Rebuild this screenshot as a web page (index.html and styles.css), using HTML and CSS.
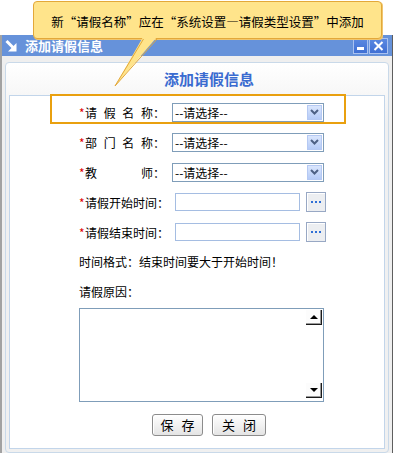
FILE: index.html
```html
<!DOCTYPE html>
<html lang="zh-CN">
<head>
    <meta charset="UTF-8">
    <title>添加请假信息</title>
    <link rel="stylesheet" href="styles.css">
</head>
<body>
    <!-- 提示气泡 -->
    <div class="tip">
        <div class="tip-box">新“请假名称”应在“系统设置—请假类型设置”中添加</div>
        <svg class="tip-tail" width="60" height="54" viewBox="0 0 60 54">
            <polygon points="43,0 57,0 15,49" fill="#ffe48b"/>
            <polyline points="43.5,2 15,49 57,2" fill="none" stroke="#e3a83a" stroke-width="1"/>
        </svg>
    </div>

    <div class="window">
        <!-- 标题栏 -->
        <div class="titlebar">
            <svg class="title-icon" width="12" height="13" viewBox="0 0 12 13">
                <line x1="1.5" y1="2" x2="8" y2="8.5" stroke="#fff" stroke-width="3"/>
                <polygon points="11.5,4 11.5,12.5 3,12.5" fill="#fff"/>
            </svg>
            <span class="title-text">添加请假信息</span>
            <div class="title-btns">
                <span class="tbtn tbtn-min"><i></i></span>
                <span class="tbtn tbtn-close">
                    <svg width="11" height="10" viewBox="0 0 11 10">
                        <path d="M1.5 1 L9.5 9 M9.5 1 L1.5 9" stroke="#fff" stroke-width="2"/>
                    </svg>
                </span>
            </div>
        </div>

        <div class="win-body">
            <div class="panel">
                <h2 class="panel-title">添加请假信息</h2>
                <div class="form">
                    <div class="mark"></div>

                    <div class="row">
                        <div class="label"><span class="req">*</span><span class="just">请假名称</span>：</div>
                        <div class="select"><span>--请选择--</span><i class="select-arrow"><svg width="9" height="6" viewBox="0 0 9 6"><path d="M1 1 L4.5 4.5 L8 1" fill="none" stroke="#4d6185" stroke-width="2"/></svg></i></div>
                    </div>
                    <div class="row">
                        <div class="label"><span class="req">*</span><span class="just">部门名称</span>：</div>
                        <div class="select"><span>--请选择--</span><i class="select-arrow"><svg width="9" height="6" viewBox="0 0 9 6"><path d="M1 1 L4.5 4.5 L8 1" fill="none" stroke="#4d6185" stroke-width="2"/></svg></i></div>
                    </div>
                    <div class="row">
                        <div class="label"><span class="req">*</span><span class="just">教师</span>：</div>
                        <div class="select"><span>--请选择--</span><i class="select-arrow"><svg width="9" height="6" viewBox="0 0 9 6"><path d="M1 1 L4.5 4.5 L8 1" fill="none" stroke="#4d6185" stroke-width="2"/></svg></i></div>
                    </div>
                    <div class="row">
                        <div class="label"><span class="req">*</span>请假开始时间：</div>
                        <div class="input"></div>
                        <span class="pick"><svg width="10" height="2" viewBox="0 0 10 2"><rect x="0" y="0" width="2" height="2" fill="#2f6fd6"/><rect x="4" y="0" width="2" height="2" fill="#2f6fd6"/><rect x="8" y="0" width="2" height="2" fill="#2f6fd6"/></svg></span>
                    </div>
                    <div class="row">
                        <div class="label"><span class="req">*</span>请假结束时间：</div>
                        <div class="input"></div>
                        <span class="pick"><svg width="10" height="2" viewBox="0 0 10 2"><rect x="0" y="0" width="2" height="2" fill="#2f6fd6"/><rect x="4" y="0" width="2" height="2" fill="#2f6fd6"/><rect x="8" y="0" width="2" height="2" fill="#2f6fd6"/></svg></span>
                    </div>

                    <div class="hint">时间格式：结束时间要大于开始时间！</div>
                    <div class="reason-label">请假原因：</div>

                    <div class="textarea">
                        <div class="ta-scroll">
                            <span class="sbtn sbtn-up"></span>
                            <span class="sbtn sbtn-down"></span>
                        </div>
                    </div>

                    <div class="actions">
                        <button class="btn btn-save">保 存</button>
                        <button class="btn btn-close">关 闭</button>
                    </div>
                </div>
            </div>
        </div>
    </div>
</body>
</html>
```

FILE: styles.css
```css
* {
    box-sizing: border-box;
    margin: 0;
    padding: 0;
}

body {
    font-family: "Noto Sans CJK SC", "Liberation Sans", sans-serif;
    font-size: 12px;
    color: #000;
    background: #fff;
    position: relative;
    width: 394px;
    height: 463px;
    overflow: hidden;
}

/* 提示气泡 */
.tip {
    position: absolute;
    left: 33px;
    top: 1px;
    z-index: 5;
}

.tip-box {
    width: 349px;
    height: 38px;
    padding-top: 4px;
    line-height: 32px;
    font-size: 12.5px;
    text-align: center;
    background: #ffe48b;
    border: 1px solid #e3a83a;
    border-radius: 4px;
    box-shadow: 1px 1px 0 #efc66f;
}

.tip-tail {
    position: absolute;
    left: 67px;
    top: 36px;
}

/* 窗口 */
.window {
    margin-top: 35px;
    width: 393px;
    height: 418px;
    border-left: 2px solid #a2a2a2;
    border-right: 1px solid #5e5e5e;
    background: #efefef;
}

.titlebar {
    height: 21px;
    display: flex;
    align-items: center;
    padding: 0 4px 0 3px;
    background: #6692da;
    color: #fff;
}

.title-icon {
    flex-shrink: 0;
}

.title-text {
    margin-left: 8px;
    font-size: 13px;
    font-weight: bold;
    line-height: 21px;
}

.title-btns {
    margin-left: auto;
    display: flex;
    gap: 1px;
}

.tbtn {
    height: 16px;
    display: flex;
    align-items: center;
    justify-content: center;
    border: 1px solid #a9c1f0;
    background: linear-gradient(#5b89e1, #3f6fd4);
}

.tbtn-min {
    width: 15px;
    align-items: flex-end;
    padding-bottom: 3px;
}

.tbtn-min i {
    display: block;
    width: 7px;
    height: 3px;
    background: #fff;
}

.tbtn-close {
    width: 19px;
}

.win-body {
    padding: 6px 3px 0;
}

.panel {
    height: 391px;
    padding: 0 3px 3px;
    border: 1px solid #c9d9e9;
    border-radius: 4px;
    background: linear-gradient(#fff, #f0f0f0 60px);
}

.panel-title {
    height: 32px;
    line-height: 32px;
    padding-left: 24px;
    text-align: center;
    font-size: 15px;
    font-weight: bold;
    color: #3a6bd0;
}

/* 表单 */
.form {
    position: relative;
    height: 354px;
    padding: 1px 0 12px 69px;
    border: 1px solid #c2d5ea;
    background: #fff;
}

.mark {
    position: absolute;
    left: 40px;
    top: -2px;
    width: 296px;
    height: 30px;
    border: 2px solid #e9a00f;
}

.row {
    height: 30px;
    display: flex;
    align-items: center;
}

.label {
    width: 93px;
    flex-shrink: 0;
    white-space: nowrap;
}

.req {
    display: inline-block;
    width: 6px;
    color: #e00000;
}

.just {
    display: inline-block;
    width: 68px;
    text-align: justify;
    text-align-last: justify;
    vertical-align: top;
}

.select {
    width: 152px;
    height: 19px;
    display: flex;
    align-items: center;
    justify-content: space-between;
    padding-left: 2px;
    border: 1px solid #7f9db9;
    background: #fff;
}

.select-arrow {
    width: 15px;
    height: 15px;
    margin-right: 1px;
    display: flex;
    align-items: center;
    justify-content: center;
    border: 1px solid #b5c9f3;
    background: linear-gradient(#dae6fd, #b5cbf7);
}

.input {
    width: 125px;
    height: 18px;
    margin-left: 3px;
    border: 1px solid #a5bde2;
    background: #fff;
}

.pick {
    width: 20px;
    height: 20px;
    margin-left: 6px;
    display: flex;
    align-items: center;
    justify-content: center;
    border: 1px solid #98a8c4;
    background: #eceef1;
    box-shadow: inset 1px 1px 0 #fff;
}

.hint {
    height: 29px;
    line-height: 29px;
}

.reason-label {
    height: 32px;
    line-height: 32px;
}

.textarea {
    width: 245px;
    height: 94px;
    display: flex;
    justify-content: flex-end;
    border: 1px solid #7f9db9;
    background: #fff;
}

.ta-scroll {
    width: 16px;
    margin-right: 1px;
    padding: 1px 0 3px;
    display: flex;
    flex-direction: column;
    justify-content: space-between;
}

.sbtn {
    height: 15px;
    display: flex;
    align-items: center;
    justify-content: center;
    background: #fcfcfc;
    border-right: 1px solid #1a1a1a;
    border-bottom: 1px solid #1a1a1a;
    box-shadow: inset -1px -1px 0 #9a9a9a;
}

.sbtn::after {
    content: "";
    width: 0;
    height: 0;
    border-left: 4px solid transparent;
    border-right: 4px solid transparent;
}

.sbtn-up::after {
    border-bottom: 4px solid #000;
}

.sbtn-down::after {
    border-top: 4px solid #000;
}

.actions {
    margin-top: 12px;
    margin-left: 73px;
    display: flex;
    gap: 9px;
}

.btn {
    height: 22px;
    font-family: inherit;
    font-size: 13px;
    line-height: 20px;
    word-spacing: 5px;
    color: #000;
    border: 1px solid #8c8c8c;
    border-radius: 3px;
    background: linear-gradient(#fff, #e4e4e4);
    box-shadow: inset 1px 1px 0 #fff;
}

.btn-save {
    width: 51px;
}

.btn-close {
    width: 54px;
}
```
